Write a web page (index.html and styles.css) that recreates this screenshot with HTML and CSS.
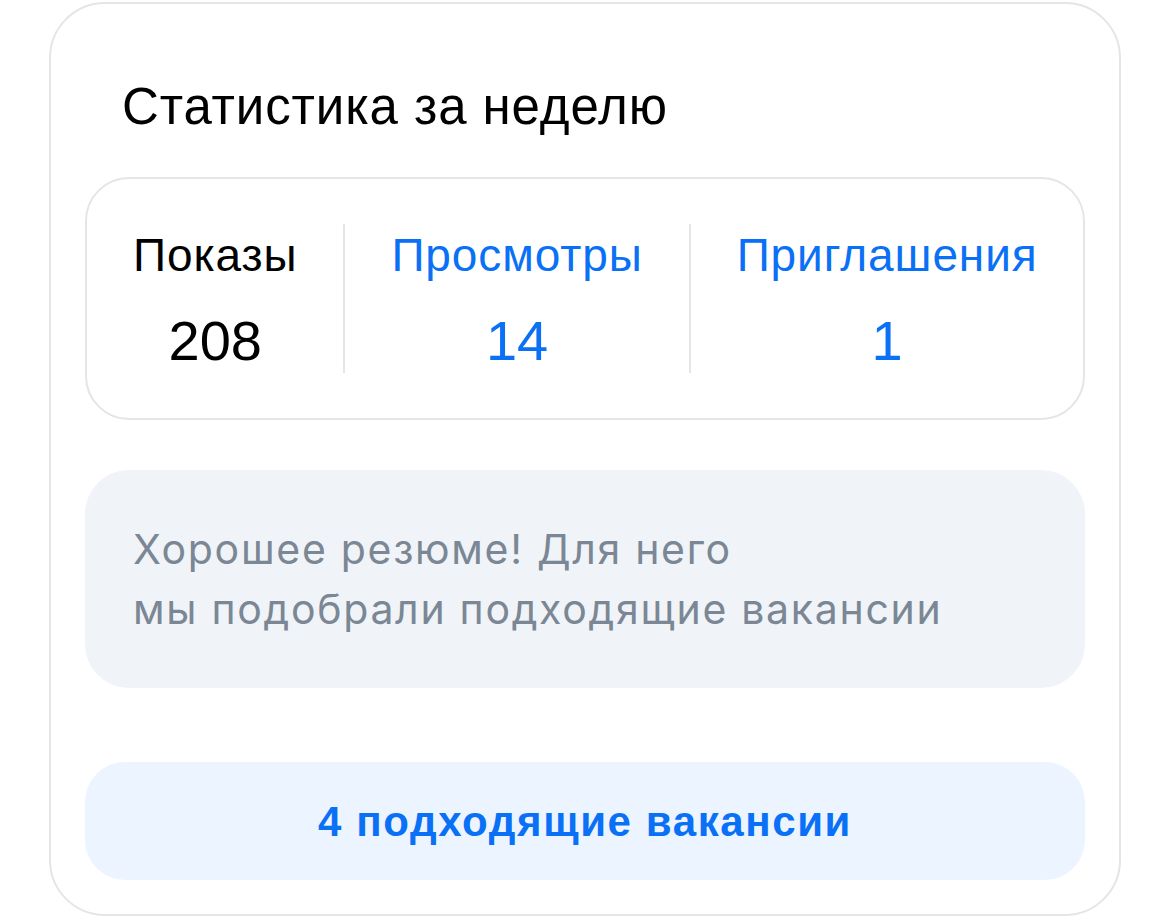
FILE: index.html
```html
<!DOCTYPE html>
<html lang="ru">
<head>
<meta charset="utf-8">
<title>Статистика за неделю</title>
<link rel="stylesheet" href="styles.css">
</head>
<body>
<div class="card">
  <h2 class="title">Статистика за неделю</h2>
  <div class="stats">
    <div class="stat">
      <div class="stat-label">Показы</div>
      <div class="stat-value">208</div>
    </div>
    <div class="stat stat-link">
      <div class="stat-label">Просмотры</div>
      <div class="stat-value">14</div>
    </div>
    <div class="stat stat-link">
      <div class="stat-label">Приглашения</div>
      <div class="stat-value">1</div>
    </div>
  </div>
  <div class="note">Хорошее резюме! Для него<br>мы подобрали подходящие вакансии</div>
  <div class="action">4 подходящие вакансии</div>
</div>
</body>
</html>
```
FILE: styles.css
```css
html, body {
  margin: 0;
  padding: 0;
  background: #ffffff;
}
body {
  font-family: "Liberation Sans", Arial, sans-serif;
  color: #000000;
}
.card {
  box-sizing: border-box;
  width: 1072px;
  height: 914px;
  margin: 2px 0 0 49px;
  border: 2px solid #e3e5e9;
  border-radius: 56px;
  padding: 0 34px;
}
.title {
  margin: 0 0 40px 37px;
  padding-top: 73px;
  font-size: 51px;
  line-height: 60px;
  font-weight: 400;
  letter-spacing: 0.9px;
}
.stats {
  display: flex;
  border: 2px solid #e3e5e9;
  border-radius: 44px;
  padding: 45px 0;
}
.stat {
  flex: 1 1 auto;
  display: flex;
  flex-direction: column;
  align-items: center;
  padding: 0 46px;
  gap: 26px;
}
.stat + .stat {
  border-left: 2px solid #e3e5e9;
}
.stat-label {
  margin-top: 3px;
  font-size: 46px;
  line-height: 56px;
  letter-spacing: 0.9px;
  white-space: nowrap;
}
.stat-value {
  font-size: 56px;
  line-height: 64px;
}
.stat-link {
  color: #0a70f5;
}
.note {
  margin-top: 50px;
  background: #f0f4f8;
  border-radius: 44px;
  padding: 49px 48px;
  font-family: Inter, "Liberation Sans", sans-serif;
  font-size: 41px;
  line-height: 60px;
  letter-spacing: 1.7px;
  color: #7b8794;
}
.action {
  margin-top: 74px;
  height: 118px;
  background: #ecf5ff;
  border-radius: 40px;
  text-align: center;
  font-size: 42px;
  line-height: 120px;
  font-weight: 700;
  letter-spacing: 1.6px;
  color: #0a70f5;
}
```
